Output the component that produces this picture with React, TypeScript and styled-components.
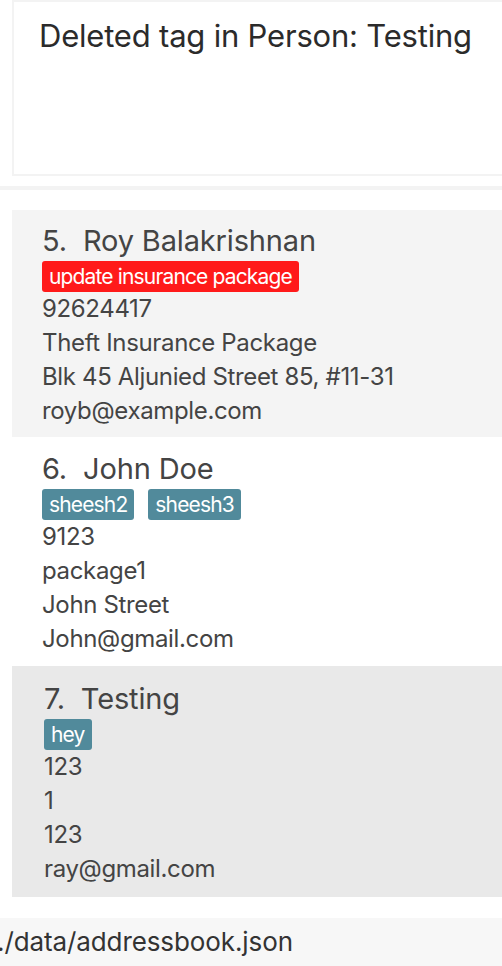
import React from "react";
import styled, { createGlobalStyle } from "styled-components";

const Global = createGlobalStyle`
  html, body { margin: 0; padding: 0; background: #ffffff; }
  body { font-family: Inter, "Open Sans", sans-serif; overflow: hidden; }
  * { box-sizing: border-box; }
`;

const Page = styled.div`
  width: 502px;
  height: 966px;
  display: flex;
  flex-direction: column;
  background: #ffffff;
  overflow: hidden;
`;

const ResultBox = styled.div`
  margin-left: 12px;
  height: 176px;
  flex-shrink: 0;
  border: 2px solid #f3f3f3;
  border-right: none;
  padding: 16px 0 0 25px;
  font-size: 31px;
  line-height: 36px;
  color: #2b2b2b;
  letter-spacing: -0.2px;
`;

const Separator = styled.div`
  margin-top: 10px;
  height: 4px;
  flex-shrink: 0;
  background: #f3f3f3;
`;

const List = styled.div`
  margin-top: 20px;
  margin-left: 12px;
  display: flex;
  flex-direction: column;
  flex-shrink: 0;
`;

const Card = styled.div<{ $bg: string; $extra: number; $indent: number }>`
  background: ${(p) => p.$bg};
  padding: ${(p) => 13 + p.$extra}px 0 ${(p) => 9 + p.$extra}px
    ${(p) => 30 + p.$indent}px;
  display: flex;
  flex-direction: column;
  color: #444444;
`;

const Name = styled.div`
  font-size: 29px;
  line-height: 36px;
  letter-spacing: -0.15px;
  white-space: pre;
`;

const Tags = styled.div`
  display: flex;
  gap: 14px;
  margin-top: 2px;
`;

const Tag = styled.span<{ $color: string }>`
  background: ${(p) => p.$color};
  color: #ffffff;
  height: 31px;
  padding: 0 7px;
  border-radius: 3px;
  font-size: 21px;
  line-height: 31px;
  letter-spacing: -0.85px;
  display: inline-flex;
  align-items: center;
`;

const Line = styled.div`
  font-size: 24px;
  line-height: 34px;
  letter-spacing: -0.35px;
  white-space: nowrap;
`;

const StatusBar = styled.div`
  margin-top: 21px;
  flex: 1;
  background: #f7f7f7;
  padding-top: 6px;
  font-size: 26px;
  line-height: 36px;
  color: #333333;
  margin-left: -3px;
  letter-spacing: -0.1px;
  white-space: nowrap;
`;

type Person = {
  idx: number;
  name: string;
  tags: { label: string; color: string }[];
  lines: string[];
  bg: string;
  extra: number;
  indent: number;
};

const people: Person[] = [
  {
    idx: 5,
    name: "Roy Balakrishnan",
    tags: [{ label: "update insurance package", color: "#ff1a1a" }],
    lines: ["92624417", "Theft Insurance Package", "Blk 45 Aljunied Street 85, #11-31", "royb@example.com"],
    bg: "#f4f4f4",
    extra: 0,
    indent: 0,
  },
  {
    idx: 6,
    name: "John Doe",
    tags: [
      { label: "sheesh2", color: "#518a9b" },
      { label: "sheesh3", color: "#518a9b" },
    ],
    lines: ["9123", "package1", "John Street", "John@gmail.com"],
    bg: "#ffffff",
    extra: 1,
    indent: 0,
  },
  {
    idx: 7,
    name: "Testing",
    tags: [{ label: "hey", color: "#518a9b" }],
    lines: ["123", "1", "123", "ray@gmail.com"],
    bg: "#e9e9e9",
    extra: 2,
    indent: 2,
  },
];

export default function App() {
  return (
    <Page>
      <Global />
      <ResultBox>Deleted tag in Person: Testing</ResultBox>
      <Separator />
      <List>
        {people.map((p) => (
          <Card key={p.idx} $bg={p.bg} $extra={p.extra} $indent={p.indent}>
            <Name>{`${p.idx}.  ${p.name}`}</Name>
            <Tags>
              {p.tags.map((t) => (
                <Tag key={t.label} $color={t.color}>
                  {t.label}
                </Tag>
              ))}
            </Tags>
            {p.lines.map((l, i) => (
              <Line key={i}>{l}</Line>
            ))}
          </Card>
        ))}
      </List>
      <StatusBar>./data/addressbook.json</StatusBar>
    </Page>
  );
}
